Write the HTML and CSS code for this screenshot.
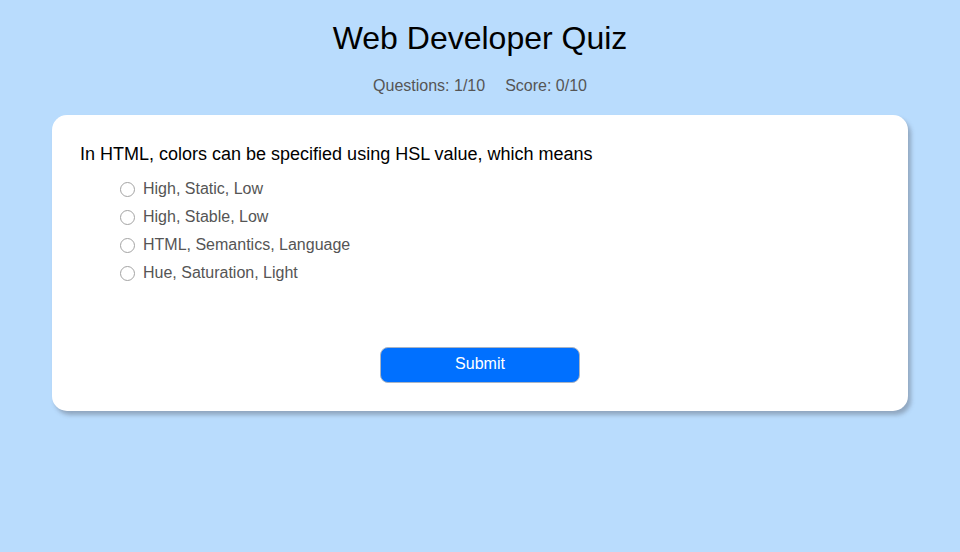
FILE: index.html
```html
<!DOCTYPE html>
<html lang="en">
<head>
<meta charset="utf-8">
<title>Web Developer Quiz</title>
<link rel="stylesheet" href="styles.css">
</head>
<body>
<header class="header">
  <h1 class="title">Web Developer Quiz</h1>
  <div class="stats">
    <span class="stat">Questions: 1/10</span>
    <span class="stat">Score: 0/10</span>
  </div>
</header>
<main class="card">
  <p class="question">In HTML, colors can be specified using HSL value, which means</p>
  <ul class="options">
    <li class="option"><label class="option-label"><input class="radio" type="radio" name="answer"><span>High, Static, Low</span></label></li>
    <li class="option"><label class="option-label"><input class="radio" type="radio" name="answer"><span>High, Stable, Low</span></label></li>
    <li class="option"><label class="option-label"><input class="radio" type="radio" name="answer"><span>HTML, Semantics, Language</span></label></li>
    <li class="option"><label class="option-label"><input class="radio" type="radio" name="answer"><span>Hue, Saturation, Light</span></label></li>
  </ul>
  <div class="actions">
    <button class="submit" type="button">Submit</button>
  </div>
</main>
</body>
</html>
```
FILE: styles.css
```css
* { box-sizing: border-box; }
html, body { margin: 0; padding: 0; }
body {
  background: #b9dcfd;
  font-family: "Liberation Sans", Arial, Helvetica, sans-serif;
  color: #000;
  height: 552px;
}
.header {
  text-align: center;
  padding-top: 20px;
}
.title {
  margin: 0;
  font-size: 32px;
  font-weight: normal;
  line-height: 37px;
  color: #000;
}
.stats {
  margin-top: 20px;
  font-size: 16px;
  line-height: 18px;
  color: #555;
  display: flex;
  justify-content: center;
  gap: 20px;
}
.card {
  margin: 20px 52px 0;
  background: #fff;
  border-radius: 15px;
  padding: 29px 28px 28px;
  box-shadow: 3px 4px 4px rgba(70, 70, 80, 0.35);
}
.question {
  margin: 0;
  font-size: 18px;
  line-height: 21px;
}
.options {
  list-style: none;
  margin: 10px 0 0;
  padding: 0 0 0 40px;
}
.option {
  height: 28px;
  display: flex;
  align-items: center;
}
.option-label {
  display: flex;
  align-items: center;
  gap: 8px;
  font-size: 16px;
  color: #555;
  cursor: pointer;
}
.radio {
  appearance: none;
  -webkit-appearance: none;
  margin: 0;
  width: 15px;
  height: 15px;
  border: 1px solid #a3a3a3;
  border-radius: 50%;
  background: #fff;
}
.actions {
  display: flex;
  justify-content: center;
  margin-top: 60px;
}
.submit {
  width: 200px;
  height: 36px;
  padding: 0 0 2px;
  background: #0070ff;
  color: #fff;
  border: 1px solid #a9b4c4;
  border-radius: 8px;
  font-family: "Liberation Sans", Arial, Helvetica, sans-serif;
  font-size: 16px;
  cursor: pointer;
}
```
